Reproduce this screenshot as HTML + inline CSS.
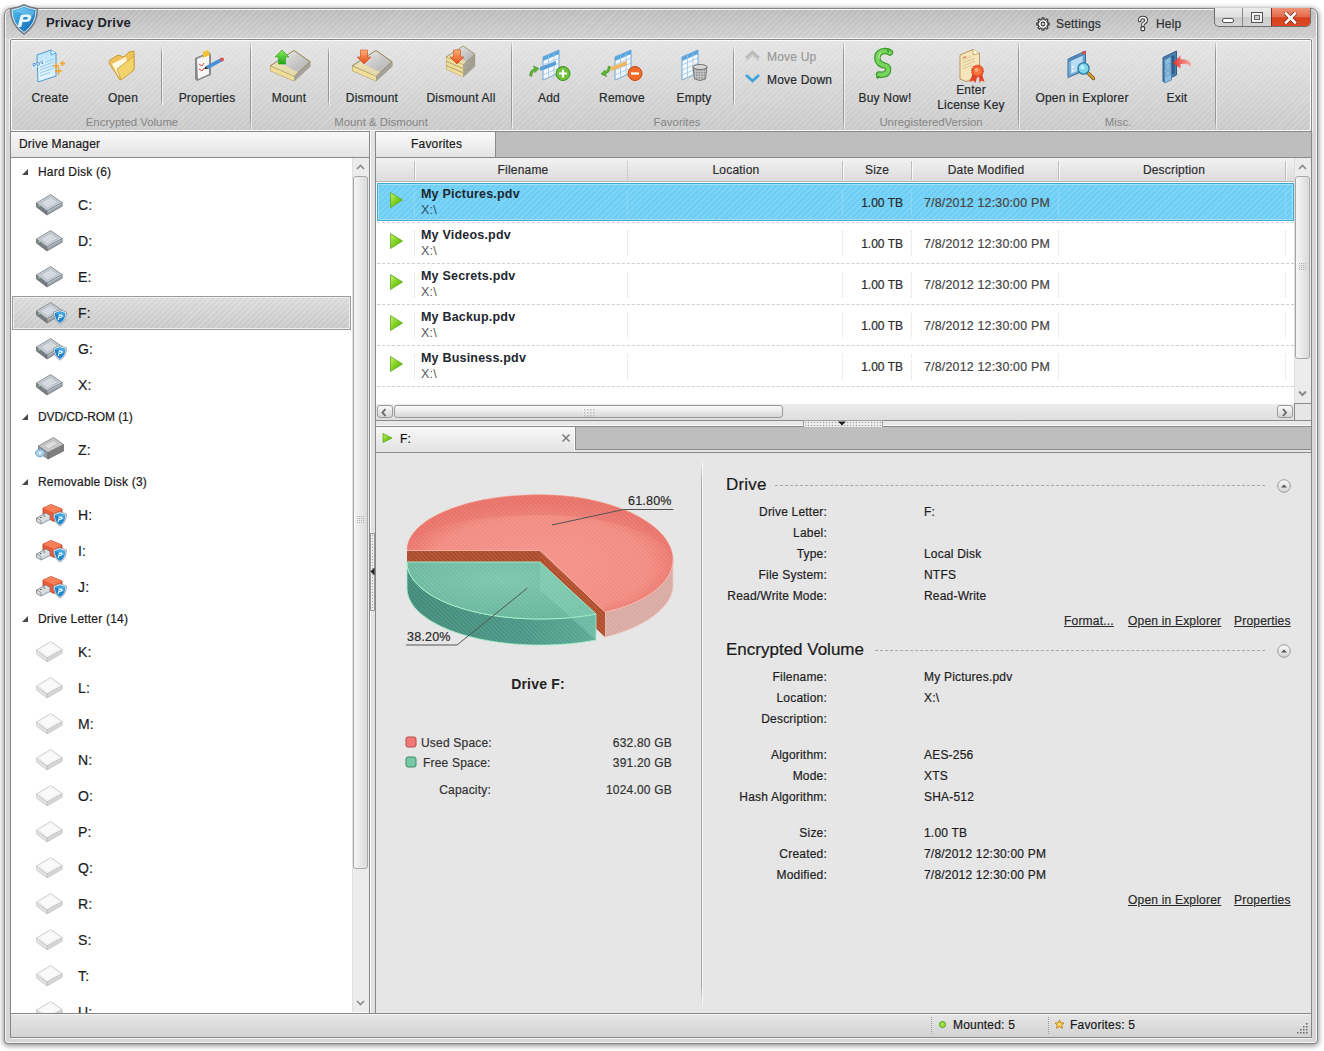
<!DOCTYPE html>
<html><head><meta charset="utf-8">
<style>
*{box-sizing:border-box}
html,body{margin:0;padding:0}
body{width:1324px;height:1051px;overflow:hidden;background:#fff;position:relative;font-family:"Liberation Sans",sans-serif;font-size:12px;color:#222;-webkit-text-stroke:0.2px currentColor;letter-spacing:0.2px}
.a{position:absolute}
.stripe{background-image:repeating-linear-gradient(135deg,rgba(255,255,255,.16) 0 1.5px,rgba(0,0,0,0) 1.5px 4px)}
#win{left:4px;top:8px;width:1314px;height:1036px;border:1px solid #858585;border-radius:7px 7px 4px 4px;background:#d6d6d6;box-shadow:0 1px 5px 1px rgba(0,0,0,.42),inset 0 0 0 1px #f4f4f4}
#title{left:6px;top:10px;width:1310px;height:28px;border-radius:5px 5px 0 0;background-color:#c4c4c4;background-image:repeating-linear-gradient(135deg,rgba(255,255,255,.14) 0 1.5px,rgba(0,0,0,0) 1.5px 4px),linear-gradient(#bcbcbc,#cecece)}
.tb{white-space:nowrap;color:#262a2c}
.tbl{text-align:center;line-height:14px}
.tl{width:120px;text-align:center;line-height:14px}
.grp{color:#858585;font-size:11.4px;text-align:center;-webkit-text-stroke:0;letter-spacing:0}
.sep{width:1px;background:linear-gradient(rgba(140,140,140,.2),#979797 12%,#979797 88%,rgba(140,140,140,.2));box-shadow:1px 0 0 rgba(255,255,255,.6)}
#toolbar{left:10px;top:39px;width:1302px;height:93px;border:1px solid #8a8a8a;border-radius:2px;box-shadow:0 0 0 1px #f2f2f2,inset 0 0 0 1px #fafafa;background-image:repeating-linear-gradient(135deg,rgba(255,255,255,.15) 0 1.5px,rgba(0,0,0,0) 1.5px 4px),linear-gradient(#e4e4e4,#c9c9c9)}
#left{left:10px;top:131px;width:360px;height:883px;border:1px solid #888;background:#fff}
.hdr{background:linear-gradient(#f9f9f9,#e3e3e3)}
.tree{font-size:12px;color:#1b1b1b;white-space:nowrap}
#right{left:375px;top:131px;width:937px;height:883px;border:1px solid #888;background:#e6e6e6}
.row{height:41px;border-bottom:1px dashed #d0d0d0;background:#fff}
.b{font-weight:bold;-webkit-text-stroke:0}
#status{left:10px;top:1013px;width:1302px;height:25px;border:1px solid #878787;box-shadow:0 1px 0 #f2f2f2,inset 0 1px 0 #f6f6f6;background:linear-gradient(#e6e6e6,#d3d3d3)}
.lbl{text-align:right;width:120px;color:#1c1c1c}
.val{color:#1c1c1c}
.lnk{text-decoration:underline;color:#333}
</style></head><body>
<div id="win" class="a"></div>
<div id="title" class="a"></div>
<div class="a b" style="left:46px;top:15px;font-size:13px;color:#1d2329">Privacy Drive</div>

<div id="toolbar" class="a"></div>



<svg class="a" style="left:0;top:0" width="1324" height="140" viewBox="0 0 1324 140">
<defs>
<linearGradient id="gdoc" x1="0" y1="0" x2="0" y2="1"><stop offset="0" stop-color="#b8e4fb"/><stop offset="1" stop-color="#e8f6fd"/></linearGradient>
<linearGradient id="gfold" x1="0" y1="0" x2="1" y2="1"><stop offset="0" stop-color="#f7d27a"/><stop offset="1" stop-color="#f2d060"/></linearGradient>
<linearGradient id="gtop" x1="0" y1="0" x2="1" y2="1"><stop offset="0" stop-color="#fafafa"/><stop offset=".45" stop-color="#d0d0d0"/><stop offset=".7" stop-color="#bdbdbd"/><stop offset="1" stop-color="#e4e4e4"/></linearGradient>
<linearGradient id="ggreen" x1="0" y1="0" x2="0" y2="1"><stop offset="0" stop-color="#8fe85a"/><stop offset="1" stop-color="#1aa815"/></linearGradient>
<linearGradient id="gred" x1="0" y1="0" x2="0" y2="1"><stop offset="0" stop-color="#ffb070"/><stop offset="1" stop-color="#e64a1c"/></linearGradient>
<linearGradient id="gblue" x1="0" y1="0" x2="1" y2="1"><stop offset="0" stop-color="#9fd0ee"/><stop offset="1" stop-color="#4b8fc0"/></linearGradient>
</defs>
<!-- logo shield -->
<defs><linearGradient id="gsh" x1="0" y1="0" x2="1" y2="1"><stop offset="0" stop-color="#5cc4f0"/><stop offset=".5" stop-color="#2a8fd4"/><stop offset="1" stop-color="#1660a8"/></linearGradient></defs>
<path d="M24 4.5 Q30 7.5 37.5 8.5 Q38 25 24 34.5 Q10 25 10.5 8.5 Q18 7.5 24 4.5 Z" fill="#7a8a98" stroke="#5a6670" stroke-width=".8"/>
<path d="M24 6.3 Q29.5 9 36 9.8 Q36 24 24 32.5 Q12 24 12 9.8 Q18.5 9 24 6.3 Z" fill="url(#gsh)" stroke="#d8e8f2" stroke-width="1"/>
<path d="M24 7.5 Q29 10 34.5 10.8 Q34 15 31 19 Q22 12 13.5 11 Q19 10 24 7.5 Z" fill="#8fdcfa" opacity=".45"/>
<path d="M17.5 27 L20.5 16 Q21 14.5 23 14.5 L28.5 14.5 Q32 15 31 18.5 Q30 22 25.5 22 L22.5 22 L21.2 27 Z M23.5 17 L23 19.5 L26 19.5 Q27.6 19.4 27.8 18.2 Q28 17 26.6 17 Z" fill="#e8f4fb" fill-rule="evenodd"/>
<!-- Create -->
<path d="M37 55 L51 50 L56 53 L56 76 L38 82 Z" fill="url(#gdoc)" stroke="#4b9bd0" stroke-width="1"/>
<path d="M51 50 L51 55 L56 53" fill="#d6effb" stroke="#4b9bd0" stroke-width=".8"/>
<path d="M40 64 L54 59 M40 67 L54 62 M40 70 L54 65 M40 73 L54 68 M40 76 L50 72.5" stroke="#8cc3e6" stroke-width=".8"/>
<path d="M32 64 L45 59 L45 64 L32 69 Z" fill="#e6f5fd"/>
<text x="33" y="67.5" font-size="5.5" font-weight="bold" fill="#3a86c6" transform="rotate(-20 33 67)" font-family="Liberation Sans">PDV</text>
<path d="M53 66 h6 M56 63 v6 M55 71 h7 M58.5 67.5 v7 M60 63.5 h5 M62.5 61 v5" stroke="#f3a42a" stroke-width="1.6"/>
<!-- Open folder -->
<path d="M110 60 L118 55 L124 57 L129 52 L134 51 L134 70 L120 80 L109 63 Z" fill="#f0c25a" stroke="#c99a3a" stroke-width="1"/>
<path d="M112 64 L126 57 L129 70 L119 77 Z" fill="#fff8e0"/>
<path d="M117 69 L134 56 L134 70 L121 80 Z" fill="#f1d56a" stroke="#c99a3a" stroke-width=".8"/>
<!-- Properties clipboard -->
<path d="M195 58 L209 52 L211 54 L211 75 L197 81 L195 79 Z" fill="#8a8a8a"/>
<path d="M197 59 L209 54 L209 74 L198 79 Z" fill="#f7f7f7"/>
<path d="M199 64 l3 2 l2-3 M199 69 l3 2 l2-3" stroke="#d44" stroke-width="1" fill="none"/>
<path d="M203 52 L208 50 L210 55 L203 58 Z" fill="#f3c233"/>
<path d="M206 66 L221 58 L223 61 L208 69 Z" fill="#4a90d9"/>
<circle cx="222" cy="59.5" r="2" fill="#d9534f"/>
<path d="M206 66 L204 69 L208 69 Z" fill="#333"/>
<!-- Mount -->
<g id="drv">
<path d="M270 65.5 L294 50 L310.5 61.5 L310.5 66.5 L294 81.5 L270 71 Z" fill="#a89660"/>
<path d="M270.5 65.8 L294 76 L294 81 L270.5 70.8 Z" fill="#efdd98"/>
<path d="M294 76 L310 61.8 L310 66.5 L294 81 Z" fill="#a2a2a2"/>
<path d="M270.5 65.8 L294 50.5 L310 61.8 L294 76 Z" fill="url(#gtop)" stroke="#9a8a58" stroke-width=".9"/>
<path d="M271.5 65.9 L277.5 62 L298 72.3 L294 76 Z" fill="#ebdfa8" opacity=".85"/>
</g>
<path d="M282 50 L289 57 L285.5 57 L285.5 64 L278.5 64 L278.5 57 L275 57 Z" fill="url(#ggreen)" stroke="#2d9a1a" stroke-width=".6"/>
<!-- Dismount -->
<use href="#drv" x="82" y="0"/>
<path d="M357 57 L364 64 L371 57 L367.5 57 L367.5 50 L360.5 50 L360.5 57 Z" fill="url(#gred)" stroke="#c84a1a" stroke-width=".6"/>
<!-- Dismount All -->
<g transform="translate(446,50) scale(.72,.72)">
<use href="#drv" x="-270" y="-56" transform="translate(0,12)"/>
<use href="#drv" x="-270" y="-56" transform="translate(0,6)"/>
<use href="#drv" x="-270" y="-56"/>
</g>
<path d="M450 57 L457 64 L464 57 L460.5 57 L460.5 50 L453.5 50 L453.5 57 Z" fill="url(#gred)" stroke="#c84a1a" stroke-width=".6"/>
<!-- grids -->
<g id="grid">
<path d="M543 57 L559 50 L559 73 L543 80 Z" fill="#f4f8fb" stroke="#6fa8d6" stroke-width="1"/>
<path d="M543 57 L559 50 L559 54 L543 61 Z" fill="#58a6e0"/>
<path d="M548.5 55 L548.5 78 M554 52.5 L554 75.5 M543 65 L559 58 M543 70 L559 63 M543 75 L559 68" stroke="#9cc4e4" stroke-width=".8"/>
</g>
<path d="M540 67 L556 61 L556 65 L540 71 Z" fill="#5a9fd8"/>
<circle cx="563" cy="73.5" r="7" fill="#6ec23a" stroke="#3f8e1e" stroke-width="1"/>
<path d="M559 73.5 h8 M563 69.5 v8" stroke="#fff" stroke-width="2.2"/>
<path d="M529.5 75.5 Q530 70 534.5 68.5 L533.5 66 L539 68.5 L535 72.5 L534.8 70.8 Q532 72 531.5 76.5 Z" fill="#5cb82e" stroke="#3a8a1a" stroke-width=".6"/>
<use href="#grid" x="72" y="0"/>
<path d="M611 67 L627 61 L627 65 L611 71 Z" fill="#f2b763"/>
<circle cx="635" cy="73.5" r="7" fill="#f06a2a" stroke="#c04a18" stroke-width="1"/>
<path d="M631 73.5 h8" stroke="#fff" stroke-width="2.2"/>
<path d="M610.5 67 Q610 72.5 605.5 74 L606.5 76.5 L601 74 L605 70 L605.2 71.7 Q608 70.5 608.5 66 Z" fill="#5cb82e" stroke="#3a8a1a" stroke-width=".6"/>
<use href="#grid" x="139" y="0"/>
<defs><pattern id="mesh" width="1.6" height="1.6" patternUnits="userSpaceOnUse"><rect width="1.6" height="1.6" fill="#c4c4c4"/><rect width=".8" height=".8" fill="#7a7a7a"/></pattern></defs>
<path d="M693 67 L694.5 79 Q700 82 705.5 79 L707 67 Q700 70 693 67 Z" fill="url(#mesh)" stroke="#666" stroke-width=".8"/>
<ellipse cx="700" cy="67" rx="7" ry="2.5" fill="#d8d8d8" stroke="#666" stroke-width=".9"/>
<!-- Move up/down chevrons -->
<path d="M746 58 L752.5 52 L759 58" stroke="#b9b9b9" stroke-width="2.6" fill="none"/>
<path d="M746 61 L752.5 55 L759 61" stroke="#c8c8c8" stroke-width="1.5" fill="none"/>
<path d="M746 75 L752.5 81 L759 75" stroke="#3aa4dc" stroke-width="2.6" fill="none"/>
<!-- Dollar -->
<path d="M890 52.5 Q887 50 882 51.5 Q876.5 53.5 877.5 59.5 Q878.5 64 884.5 65.5 Q889 66.5 888 71 Q886.5 75.5 879 74.5" stroke="#3b9a2e" stroke-width="6.4" fill="none" stroke-linecap="round"/>
<path d="M890 52.5 Q887 50 882 51.5 Q876.5 53.5 877.5 59.5 Q878.5 64 884.5 65.5 Q889 66.5 888 71 Q886.5 75.5 879 74.5" stroke="#78d45a" stroke-width="4" fill="none" stroke-linecap="round"/>
<path d="M881 52.5 Q878.5 55 879 59" stroke="#b4f090" stroke-width="1.2" fill="none"/>
<path d="M886 49.5 L889.5 49.5 L888.5 53 Z M876 77 L880 76 L877.5 79.5 Z" fill="#3b9a2e"/>
<!-- Certificate -->
<path d="M960 55 L973 49.5 L979.5 53 L979.5 76 L966 81.5 L960 79 Z" fill="#f6e4bb" stroke="#b89a5a" stroke-width="1"/>
<path d="M973 49.5 L973 55 L979.5 53" fill="#fff6e0" stroke="#b89a5a" stroke-width=".8"/>
<path d="M962.5 60 L971 56.5 M962.5 63 L975 58 M962.5 66 L975 61 M962.5 69 L972 65" stroke="#dcc090" stroke-width=".9"/>
<rect x="963" y="57" width="3" height="1.5" fill="#e08060" transform="rotate(-22 963 57)"/>
<path d="M972.5 74 L969.5 82 L973.5 80.5 L975.5 83 L977.5 75 Z M979 75 L979.5 83 L981.5 80.5 L984.5 82 L982 74 Z" fill="#e3442a"/>
<circle cx="977.5" cy="71" r="5.8" fill="#f05a28" stroke="#e04020" stroke-width="1.3" stroke-dasharray="1.3 .9"/>
<circle cx="977.5" cy="71" r="3.8" fill="#f57a40"/>
<circle cx="976.5" cy="70" r="1.8" fill="#ffb080"/>
<!-- Open in explorer -->
<defs>
<linearGradient id="gwin" x1="0" y1="0" x2="1" y2="1"><stop offset="0" stop-color="#8cc4ea"/><stop offset="1" stop-color="#4f8fc0"/></linearGradient>
<linearGradient id="garr" x1="0" y1="0" x2="1" y2="0"><stop offset="0" stop-color="#e8302a"/><stop offset="1" stop-color="#f7b0a8"/></linearGradient>
</defs>
<path d="M1068 59 L1085.5 51 L1085.5 70 L1068 77.5 Z" fill="url(#gwin)" stroke="#3a6e9a" stroke-width="1"/>
<path d="M1070.5 60.5 L1083 55 L1083 69 L1070.5 74.5 Z" fill="#b9dcf2" stroke="#6aa0c8" stroke-width=".6"/>
<path d="M1068.5 59 L1085 51.5 L1085 54.5 L1068.5 62 Z" fill="#4f86b8"/>
<rect x="1082.5" y="51" width="3" height="3.5" fill="#e0503a"/>
<rect x="1072" y="66" width="1.6" height="1.6" fill="#fff"/><rect x="1072" y="70" width="1.6" height="1.6" fill="#fff"/>
<path d="M1087.5 72.5 L1093.5 78.5" stroke="#6a4a10" stroke-width="3.2" stroke-linecap="round"/>
<path d="M1087.5 72.5 L1093.5 78.5" stroke="#e0a030" stroke-width="1.8" stroke-linecap="round"/>
<circle cx="1083.5" cy="68.5" r="5.6" fill="#7fd4ea" stroke="#2a7ea8" stroke-width="1.4"/>
<circle cx="1082.3" cy="67.2" r="2.2" fill="#c8f2fc" opacity=".8"/>
<!-- Exit door -->
<path d="M1163 57.5 L1176.5 51 L1176.5 75 L1163 81.5 Z" fill="#4a7fae" stroke="#2f5d86" stroke-width="1"/>
<path d="M1165 59.5 L1174.5 55 L1174.5 73.5 L1165 78 Z" fill="#2f5f88"/>
<path d="M1164.5 60 L1171 56.5 L1171.5 80 L1164.5 83 Z" fill="#8cbedf" stroke="#4a7fae" stroke-width=".8"/>
<path d="M1166 65 L1170 63 L1170 68 L1166 70 Z M1166 72 L1170 70 L1170 75 L1166 77 Z" fill="none" stroke="#5a8fba" stroke-width=".6"/>
<path d="M1173 63 L1180.5 55.5 L1180.5 59.5 Q1187 58.5 1191 63 L1191 67 Q1187 62.5 1180.5 64 L1180.5 68.5 Z" fill="url(#garr)"/>
<!-- settings gear / help -->
<path d="M1047.49 23.00 L1049.12 23.01 L1049.12 24.99 L1047.49 25.00 L1047.25 25.76 L1046.88 26.46 L1048.03 27.63 L1046.63 29.03 L1045.46 27.88 L1044.76 28.25 L1044.00 28.49 L1043.99 30.12 L1042.01 30.12 L1042.00 28.49 L1041.24 28.25 L1040.54 27.88 L1039.37 29.03 L1037.97 27.63 L1039.12 26.46 L1038.75 25.76 L1038.51 25.00 L1036.88 24.99 L1036.88 23.01 L1038.51 23.00 L1038.75 22.24 L1039.12 21.54 L1037.97 20.37 L1039.37 18.97 L1040.54 20.12 L1041.24 19.75 L1042.00 19.51 L1042.01 17.88 L1043.99 17.88 L1044.00 19.51 L1044.76 19.75 L1045.46 20.12 L1046.63 18.97 L1048.03 20.37 L1046.88 21.54 L1047.25 22.24 Z" fill="#fff" stroke="#3a3a3a" stroke-width="1.3" stroke-linejoin="round"/>
<circle cx="1043" cy="24" r="1.9" fill="#ddd" stroke="#3a3a3a" stroke-width="1.1"/>
<path d="M1139.5 20.5 Q1139.5 17.5 1142.8 17.5 Q1146.2 17.5 1146.2 20.3 Q1146.2 22.3 1143.8 23.3 Q1142.8 23.8 1142.8 25.5" stroke="#3a3a3a" stroke-width="3.6" fill="none" stroke-linecap="round"/>
<path d="M1139.5 20.5 Q1139.5 17.5 1142.8 17.5 Q1146.2 17.5 1146.2 20.3 Q1146.2 22.3 1143.8 23.3 Q1142.8 23.8 1142.8 25.5" stroke="#fff" stroke-width="1.6" fill="none" stroke-linecap="round"/>
<rect x="1141" y="27" width="3.6" height="3.6" rx=".8" fill="#fff" stroke="#3a3a3a" stroke-width="1.1"/>
</svg>


<div class="a tb" style="left:1056px;top:17px;line-height:14px;color:#2c3033">Settings</div>
<div class="a tb" style="left:1156px;top:17px;line-height:14px;color:#2c3033">Help</div>
<div class="a" style="left:1214px;top:8px;width:97px;height:19px;border:1px solid #6e6e6e;border-top:none;border-radius:0 0 5px 5px;overflow:hidden;background:linear-gradient(#ececec 0,#dedede 50%,#cdcdcd 51%,#d4d4d4 100%)">
 <div class="a" style="left:27px;top:0;width:1px;height:19px;background:#8a8a8a"></div>
 <div class="a" style="left:56px;top:0;width:40px;height:19px;border-left:1px solid #7a3020;background:linear-gradient(#ee9478 0,#e46a4c 45%,#d8401c 52%,#dc4a24 100%)"></div>
</div>
<div class="a" style="left:1222px;top:18px;width:12px;height:5px;border:1px solid #555;border-radius:2px;background:#fff"></div>
<div class="a" style="left:1251px;top:12px;width:12px;height:11px;border:1px solid #555;background:#f4f4f4"><div class="a" style="left:2px;top:2px;width:6px;height:5px;border:1px solid #666;background:#ccc"></div></div>
<svg class="a" style="left:1284px;top:12px" width="13" height="12"><path d="M2 1.5 L11 10.5 M11 1.5 L2 10.5" stroke="#7a2a18" stroke-width="4" stroke-linecap="round"/><path d="M2 1.5 L11 10.5 M11 1.5 L2 10.5" stroke="#fff" stroke-width="2.6" stroke-linecap="square"/></svg>

<!-- TOOLBAR -->
<div class="a sep" style="left:161px;top:47px;height:59px"></div>
<div class="a sep" style="left:250px;top:42px;height:87px"></div>
<div class="a sep" style="left:328px;top:47px;height:59px"></div>
<div class="a sep" style="left:511px;top:42px;height:87px"></div>
<div class="a sep" style="left:733px;top:47px;height:59px"></div>
<div class="a sep" style="left:843px;top:42px;height:87px"></div>
<div class="a sep" style="left:1018px;top:42px;height:87px"></div>
<div class="a sep" style="left:1215px;top:42px;height:87px"></div>
<div class="a tb tl" style="left:-10px;top:91px">Create</div>
<div class="a tb tl" style="left:63px;top:91px">Open</div>
<div class="a tb tl" style="left:147px;top:91px">Properties</div>
<div class="a tb tl" style="left:229px;top:91px">Mount</div>
<div class="a tb tl" style="left:312px;top:91px">Dismount</div>
<div class="a tb tl" style="left:401px;top:91px">Dismount All</div>
<div class="a tb tl" style="left:489px;top:91px">Add</div>
<div class="a tb tl" style="left:562px;top:91px">Remove</div>
<div class="a tb tl" style="left:634px;top:91px">Empty</div>
<div class="a tb" style="left:767px;top:50px;line-height:14px;color:#9a9a9a">Move Up</div>
<div class="a tb" style="left:767px;top:73px;line-height:14px">Move Down</div>
<div class="a tb tl" style="left:825px;top:91px">Buy Now!</div>
<div class="a tb tl" style="left:911px;top:83px;line-height:15px">Enter<br>License Key</div>
<div class="a tb tl" style="left:1022px;top:91px">Open in Explorer</div>
<div class="a tb tl" style="left:1117px;top:91px">Exit</div>
<div class="a grp tl" style="left:72px;top:115px">Encrypted Volume</div>
<div class="a grp tl" style="left:321px;top:115px">Mount &amp; Dismount</div>
<div class="a grp tl" style="left:617px;top:115px">Favorites</div>
<div class="a grp tl" style="left:871px;top:115px">UnregisteredVersion</div>
<div class="a grp tl" style="left:1058px;top:115px">Misc.</div>

<div id="left" class="a"></div>
<div class="a hdr" style="left:11px;top:132px;width:358px;height:26px;border-bottom:1px solid #8a8a8a"></div>
<div class="a tree" style="left:19px;top:137px">Drive Manager</div>


<!-- LEFT TREE -->
<div class="a" style="left:12px;top:296px;width:339px;height:34px;border:1px solid #9c9c9c;box-shadow:inset 0 0 0 1px #eeeeee;background-image:repeating-linear-gradient(135deg,rgba(255,255,255,.2) 0 1.5px,rgba(0,0,0,0) 1.5px 4px),linear-gradient(#dadada,#c8c8c8)"></div>
<div class="a" style="left:352px;top:158px;width:17px;height:854px;background:#ececec;border-left:1px solid #e0e0e0"></div>
<div class="a" style="left:353px;top:176px;width:15px;height:693px;border:1px solid #a8a8a8;border-radius:3px;background:linear-gradient(90deg,#f6f6f6,#dadada)"></div>
<svg class="a" style="left:352px;top:158px" width="17" height="854">
<path d="M5 11 L8.5 7.5 L12 11" stroke="#8a8a8a" stroke-width="1.6" fill="none"/>
<path d="M5 843 L8.5 846.5 L12 843" stroke="#8a8a8a" stroke-width="1.6" fill="none"/>
<g fill="#b0b0b0"><rect x="5" y="358" width="1" height="1"/><rect x="7" y="358" width="1" height="1"/><rect x="9" y="358" width="1" height="1"/><rect x="11" y="358" width="1" height="1"/>
<rect x="5" y="360" width="1" height="1"/><rect x="7" y="360" width="1" height="1"/><rect x="9" y="360" width="1" height="1"/><rect x="11" y="360" width="1" height="1"/>
<rect x="5" y="362" width="1" height="1"/><rect x="7" y="362" width="1" height="1"/><rect x="9" y="362" width="1" height="1"/><rect x="11" y="362" width="1" height="1"/>
<rect x="5" y="364" width="1" height="1"/><rect x="7" y="364" width="1" height="1"/><rect x="9" y="364" width="1" height="1"/><rect x="11" y="364" width="1" height="1"/></g>
</svg>

<svg class="a" style="left:0;top:150px" width="352" height="863" viewBox="0 150 352 863">
<defs>
<symbol id="hdd" viewBox="0 0 27 22" width="27" height="22">
<path d="M0.5 9 L11 16.8 L11 21 L0.5 13 Z" fill="#767d83" stroke="#5e656b" stroke-width=".7"/>
<path d="M11 16.8 L26.2 8.5 L26.2 12.2 L11 21 Z" fill="#9aa2aa" stroke="#6d747a" stroke-width=".7"/>
<path d="M11.5 17.5 L25.5 9.8" stroke="#d8e0e6" stroke-width=".7"/>
<path d="M0.5 9 L14.6 0.5 L26.2 8.5 L11 16.8 Z" fill="#c6ccd3" stroke="#7b8288" stroke-width=".8"/>
<path d="M4.5 9 L14.6 3 L22 8.4 L11.2 14.4 Z" fill="#d4dae0" stroke="#a9b0b6" stroke-width=".6"/>
<rect x="2" y="11" width="2" height="1.2" fill="#8ad080"/>
</symbol>
<symbol id="hdde" viewBox="0 0 27 22" width="27" height="22">
<path d="M0.5 9 L11 16.8 L11 21 L0.5 13 Z" fill="#e2e2e2" stroke="#c4c4c4" stroke-width=".7"/>
<path d="M11 16.8 L26.2 8.5 L26.2 12.2 L11 21 Z" fill="#d6d6d6" stroke="#c0c0c0" stroke-width=".7"/>
<path d="M0.5 9 L14.6 0.5 L26.2 8.5 L11 16.8 Z" fill="#f4f4f4" stroke="#c6c6c6" stroke-width=".8"/>
<path d="M4 9 L14.6 2.5 L22.5 8.3 L11.2 14.6 Z" fill="#fafafa"/>
</symbol>
<symbol id="shield" viewBox="0 0 13 14" width="13" height="14" overflow="visible">
<path d="M6.5 -0.2 L13 2 Q13 10.2 6.5 14.2 Q0 10.2 0 2 Z" fill="#e6eef4" stroke="#7a8a96" stroke-width=".7"/>
<path d="M6.5 1.2 L11.8 2.9 Q11.8 9.6 6.5 12.9 Q1.2 9.6 1.2 2.9 Z" fill="#1f86cc"/>
<path d="M6.5 1.5 L11.5 3.1 Q11.3 6 9.8 8 Q6 4 1.6 3.6 Z" fill="#5cc0f0" opacity=".6"/>
<path d="M4.3 10 L5.4 4.6 L8 4.6 Q9.6 5 9.2 6.6 Q8.7 7.9 6.9 7.9 L5.9 7.9 L5.4 10 Z M6.1 5.8 L5.9 6.8 L7 6.8 Q7.8 6.7 7.8 6.2 Q7.8 5.8 7.2 5.8 Z" fill="#eef8fd" fill-rule="evenodd"/>
</symbol>
</defs>

<path d="M22 175 L28 175 L28 169 Z" fill="#4a4a4a"/>
<path d="M22 420 L28 420 L28 414 Z" fill="#4a4a4a"/>
<path d="M22 485 L28 485 L28 479 Z" fill="#4a4a4a"/>
<path d="M22 622 L28 622 L28 616 Z" fill="#4a4a4a"/>
<use href="#hdd" x="36" y="194"/>
<use href="#hdd" x="36" y="230"/>
<use href="#hdd" x="36" y="266"/>
<use href="#hdd" x="36" y="302"/>
<use href="#shield" x="53.5" y="310"/>
<use href="#hdd" x="36" y="338"/>
<use href="#shield" x="53.5" y="346"/>
<use href="#hdd" x="36" y="374"/>
<use href="#hdde" x="36" y="641"/>
<use href="#hdde" x="36" y="677"/>
<use href="#hdde" x="36" y="713"/>
<use href="#hdde" x="36" y="749"/>
<use href="#hdde" x="36" y="785"/>
<use href="#hdde" x="36" y="821"/>
<use href="#hdde" x="36" y="857"/>
<use href="#hdde" x="36" y="893"/>
<use href="#hdde" x="36" y="929"/>
<use href="#hdde" x="36" y="965"/>
<use href="#hdde" x="36" y="1001"/>
<g transform="translate(38,437)">
<path d="M0.5 9 L10 15.5 L10 22 L0.5 15.5 Z" fill="#9a9a9a" stroke="#6e6e6e" stroke-width=".7"/>
<path d="M10 15.5 L25.5 7.5 L25.5 14 L10 22 Z" fill="#7e7e7e" stroke="#646464" stroke-width=".7"/>
<path d="M0.5 9 L15.5 0.5 L25.5 7.5 L10 15.5 Z" fill="#c8c8c8" stroke="#7a7a7a" stroke-width=".8"/>
<path d="M6 8.5 L15.5 3.5 L20 7 L10.5 12 Z" fill="#dcdcdc" stroke="#b0b0b0" stroke-width=".6"/>
</g>
<ellipse cx="40" cy="453" rx="4.5" ry="3.8" fill="#a9d2ea" stroke="#5d9cc2" stroke-width=".8"/>
<ellipse cx="40" cy="453" rx="1.3" ry="1" fill="#fff"/>

<g transform="translate(36,504)">
<path d="M7 4 L15 0.5 L26 5 L26 13 L18 17.5 L7 12 Z" fill="#e95a38" stroke="#b8401f" stroke-width=".8"/>
<path d="M7 4 L15 0.5 L26 5 L18 9 Z" fill="#f4805a"/>
<path d="M0.5 14 L10 9 L14 11.5 L14 15.5 L5 20 L0.5 17.5 Z" fill="#d8dde2" stroke="#7a8288" stroke-width=".8"/>
<path d="M0.5 14 L5 16.5 L5 20" stroke="#7a8288" stroke-width=".7" fill="none"/>
<rect x="4" y="13" width="1.5" height="1" fill="#555"/><rect x="7.5" y="11.5" width="1.5" height="1" fill="#555"/>
</g>
<use href="#shield" x="53.5" y="512"/>
<g transform="translate(36,540)">
<path d="M7 4 L15 0.5 L26 5 L26 13 L18 17.5 L7 12 Z" fill="#e95a38" stroke="#b8401f" stroke-width=".8"/>
<path d="M7 4 L15 0.5 L26 5 L18 9 Z" fill="#f4805a"/>
<path d="M0.5 14 L10 9 L14 11.5 L14 15.5 L5 20 L0.5 17.5 Z" fill="#d8dde2" stroke="#7a8288" stroke-width=".8"/>
<path d="M0.5 14 L5 16.5 L5 20" stroke="#7a8288" stroke-width=".7" fill="none"/>
<rect x="4" y="13" width="1.5" height="1" fill="#555"/><rect x="7.5" y="11.5" width="1.5" height="1" fill="#555"/>
</g>
<use href="#shield" x="53.5" y="548"/>
<g transform="translate(36,576)">
<path d="M7 4 L15 0.5 L26 5 L26 13 L18 17.5 L7 12 Z" fill="#e95a38" stroke="#b8401f" stroke-width=".8"/>
<path d="M7 4 L15 0.5 L26 5 L18 9 Z" fill="#f4805a"/>
<path d="M0.5 14 L10 9 L14 11.5 L14 15.5 L5 20 L0.5 17.5 Z" fill="#d8dde2" stroke="#7a8288" stroke-width=".8"/>
<path d="M0.5 14 L5 16.5 L5 20" stroke="#7a8288" stroke-width=".7" fill="none"/>
<rect x="4" y="13" width="1.5" height="1" fill="#555"/><rect x="7.5" y="11.5" width="1.5" height="1" fill="#555"/>
</g>
<use href="#shield" x="53.5" y="584"/>
</svg>
<div class="a tree" style="left:38px;top:165px;line-height:14px">Hard Disk (6)</div>
<div class="a tree" style="left:38px;top:410px;line-height:14px;letter-spacing:-0.1px">DVD/CD-ROM (1)</div>
<div class="a tree" style="left:38px;top:475px;line-height:14px">Removable Disk (3)</div>
<div class="a tree" style="left:38px;top:612px;line-height:14px">Drive Letter (14)</div>
<div class="a tree" style="left:78px;top:198px;line-height:14px;font-size:14px">C:</div>
<div class="a tree" style="left:78px;top:234px;line-height:14px;font-size:14px">D:</div>
<div class="a tree" style="left:78px;top:270px;line-height:14px;font-size:14px">E:</div>
<div class="a tree" style="left:78px;top:306px;line-height:14px;font-size:14px">F:</div>
<div class="a tree" style="left:78px;top:342px;line-height:14px;font-size:14px">G:</div>
<div class="a tree" style="left:78px;top:378px;line-height:14px;font-size:14px">X:</div>
<div class="a tree" style="left:78px;top:645px;line-height:14px;font-size:14px">K:</div>
<div class="a tree" style="left:78px;top:681px;line-height:14px;font-size:14px">L:</div>
<div class="a tree" style="left:78px;top:717px;line-height:14px;font-size:14px">M:</div>
<div class="a tree" style="left:78px;top:753px;line-height:14px;font-size:14px">N:</div>
<div class="a tree" style="left:78px;top:789px;line-height:14px;font-size:14px">O:</div>
<div class="a tree" style="left:78px;top:825px;line-height:14px;font-size:14px">P:</div>
<div class="a tree" style="left:78px;top:861px;line-height:14px;font-size:14px">Q:</div>
<div class="a tree" style="left:78px;top:897px;line-height:14px;font-size:14px">R:</div>
<div class="a tree" style="left:78px;top:933px;line-height:14px;font-size:14px">S:</div>
<div class="a tree" style="left:78px;top:969px;line-height:14px;font-size:14px">T:</div>
<div class="a tree" style="left:78px;top:1005px;line-height:14px;font-size:14px;height:8px;overflow:hidden">U:</div>
<div class="a tree" style="left:78px;top:443px;line-height:14px;font-size:14px">Z:</div>
<div class="a tree" style="left:78px;top:508px;line-height:14px;font-size:14px">H:</div>
<div class="a tree" style="left:78px;top:544px;line-height:14px;font-size:14px">I:</div>
<div class="a tree" style="left:78px;top:580px;line-height:14px;font-size:14px">J:</div>
<div id="right" class="a"></div>


<!-- RIGHT PANEL -->
<div class="a" style="left:370px;top:131px;width:5px;height:882px;background:#e2e2e2;box-shadow:inset 1px 0 0 #f8f8f8"></div>
<div class="a" style="left:376px;top:132px;width:935px;height:26px;background:#bebebe;border-bottom:1px solid #8a8a8a"></div>
<div class="a hdr" style="left:376px;top:132px;width:120px;height:25px;border-right:1px solid #8a8a8a;background:linear-gradient(#fafafa,#e4e4e4)"></div>
<div class="a tb" style="left:411px;top:137px;line-height:14px;color:#1a1a1a">Favorites</div>
<div class="a" style="left:376px;top:158px;width:935px;height:24px;border-bottom:1px solid #b8b8b8;background:linear-gradient(#f2f2f2,#dcdcdc)"></div>
<div class="a" style="left:376px;top:182px;width:918px;height:222px;background:#fff"></div>

<div class="a" style="left:414px;top:161px;width:2px;height:19px;background:#bdbdbd;border-right:1px solid #fafafa"></div>
<div class="a" style="left:842px;top:161px;width:2px;height:19px;background:#bdbdbd;border-right:1px solid #fafafa"></div>
<div class="a" style="left:911px;top:161px;width:2px;height:19px;background:#bdbdbd;border-right:1px solid #fafafa"></div>
<div class="a" style="left:1058px;top:161px;width:2px;height:19px;background:#bdbdbd;border-right:1px solid #fafafa"></div>
<div class="a" style="left:1285px;top:161px;width:2px;height:19px;background:#bdbdbd;border-right:1px solid #fafafa"></div>
<div class="a" style="left:627px;top:161px;width:0;height:19px;border-left:1px dotted #b8b8b8"></div>
<div class="a tb tl" style="left:463px;top:163px;color:#2e2e2e">Filename</div>
<div class="a tb tl" style="left:676px;top:163px;color:#2e2e2e">Location</div>
<div class="a tb tl" style="left:817px;top:163px;color:#2e2e2e">Size</div>
<div class="a tb tl" style="left:926px;top:163px;color:#2e2e2e">Date Modified</div>
<div class="a tb tl" style="left:1114px;top:163px;color:#2e2e2e">Description</div>
<div class="a" style="left:377px;top:183px;width:917px;height:38px;border:1px solid #40a8d8;box-shadow:inset 0 0 0 1px #9fe0fa;background-color:#6ccef5;background-image:repeating-linear-gradient(135deg,rgba(255,255,255,.12) 0 2px,rgba(0,0,0,0) 2px 4px)"></div>
<div class="a" style="left:377px;top:222px;width:917px;height:1px;border-top:1px dashed #cfcfcf"></div>
<div class="a" style="left:414px;top:190px;height:25px;width:0;border-left:1px dotted #a8dcf2"></div>
<div class="a" style="left:627px;top:190px;height:25px;width:0;border-left:1px dotted #a8dcf2"></div>
<div class="a" style="left:842px;top:190px;height:25px;width:0;border-left:1px dotted #a8dcf2"></div>
<div class="a" style="left:911px;top:190px;height:25px;width:0;border-left:1px dotted #a8dcf2"></div>
<div class="a" style="left:1058px;top:190px;height:25px;width:0;border-left:1px dotted #a8dcf2"></div>
<div class="a" style="left:1285px;top:190px;height:25px;width:0;border-left:1px dotted #a8dcf2"></div>
<div class="a b" style="left:421px;top:187px;line-height:14px;font-size:12.5px;color:#1d2730">My Pictures.pdv</div>
<div class="a" style="left:421px;top:203px;line-height:14px;font-size:12.5px;color:#2b4f66;-webkit-text-stroke:0">X:\</div>
<div class="a" style="left:842px;top:196px;width:61px;text-align:right;line-height:14px;color:#2a2a2a;letter-spacing:0">1.00 TB</div>
<div class="a" style="left:924px;top:196px;line-height:14px;font-size:12.4px;color:#444">7/8/2012 12:30:00 PM</div>
<div class="a" style="left:377px;top:263px;width:917px;height:1px;border-top:1px dashed #cfcfcf"></div>
<div class="a" style="left:414px;top:231px;height:25px;width:0;border-left:1px dotted #dadada"></div>
<div class="a" style="left:627px;top:231px;height:25px;width:0;border-left:1px dotted #dadada"></div>
<div class="a" style="left:842px;top:231px;height:25px;width:0;border-left:1px dotted #dadada"></div>
<div class="a" style="left:911px;top:231px;height:25px;width:0;border-left:1px dotted #dadada"></div>
<div class="a" style="left:1058px;top:231px;height:25px;width:0;border-left:1px dotted #dadada"></div>
<div class="a" style="left:1285px;top:231px;height:25px;width:0;border-left:1px dotted #dadada"></div>
<div class="a b" style="left:421px;top:228px;line-height:14px;font-size:12.5px;color:#1d2730">My Videos.pdv</div>
<div class="a" style="left:421px;top:244px;line-height:14px;font-size:12.5px;color:#5a5a5a;-webkit-text-stroke:0">X:\</div>
<div class="a" style="left:842px;top:237px;width:61px;text-align:right;line-height:14px;color:#2a2a2a;letter-spacing:0">1.00 TB</div>
<div class="a" style="left:924px;top:237px;line-height:14px;font-size:12.4px;color:#444">7/8/2012 12:30:00 PM</div>
<div class="a" style="left:377px;top:304px;width:917px;height:1px;border-top:1px dashed #cfcfcf"></div>
<div class="a" style="left:414px;top:272px;height:25px;width:0;border-left:1px dotted #dadada"></div>
<div class="a" style="left:627px;top:272px;height:25px;width:0;border-left:1px dotted #dadada"></div>
<div class="a" style="left:842px;top:272px;height:25px;width:0;border-left:1px dotted #dadada"></div>
<div class="a" style="left:911px;top:272px;height:25px;width:0;border-left:1px dotted #dadada"></div>
<div class="a" style="left:1058px;top:272px;height:25px;width:0;border-left:1px dotted #dadada"></div>
<div class="a" style="left:1285px;top:272px;height:25px;width:0;border-left:1px dotted #dadada"></div>
<div class="a b" style="left:421px;top:269px;line-height:14px;font-size:12.5px;color:#1d2730">My Secrets.pdv</div>
<div class="a" style="left:421px;top:285px;line-height:14px;font-size:12.5px;color:#5a5a5a;-webkit-text-stroke:0">X:\</div>
<div class="a" style="left:842px;top:278px;width:61px;text-align:right;line-height:14px;color:#2a2a2a;letter-spacing:0">1.00 TB</div>
<div class="a" style="left:924px;top:278px;line-height:14px;font-size:12.4px;color:#444">7/8/2012 12:30:00 PM</div>
<div class="a" style="left:377px;top:345px;width:917px;height:1px;border-top:1px dashed #cfcfcf"></div>
<div class="a" style="left:414px;top:313px;height:25px;width:0;border-left:1px dotted #dadada"></div>
<div class="a" style="left:627px;top:313px;height:25px;width:0;border-left:1px dotted #dadada"></div>
<div class="a" style="left:842px;top:313px;height:25px;width:0;border-left:1px dotted #dadada"></div>
<div class="a" style="left:911px;top:313px;height:25px;width:0;border-left:1px dotted #dadada"></div>
<div class="a" style="left:1058px;top:313px;height:25px;width:0;border-left:1px dotted #dadada"></div>
<div class="a" style="left:1285px;top:313px;height:25px;width:0;border-left:1px dotted #dadada"></div>
<div class="a b" style="left:421px;top:310px;line-height:14px;font-size:12.5px;color:#1d2730">My Backup.pdv</div>
<div class="a" style="left:421px;top:326px;line-height:14px;font-size:12.5px;color:#5a5a5a;-webkit-text-stroke:0">X:\</div>
<div class="a" style="left:842px;top:319px;width:61px;text-align:right;line-height:14px;color:#2a2a2a;letter-spacing:0">1.00 TB</div>
<div class="a" style="left:924px;top:319px;line-height:14px;font-size:12.4px;color:#444">7/8/2012 12:30:00 PM</div>
<div class="a" style="left:377px;top:386px;width:917px;height:1px;border-top:1px dashed #cfcfcf"></div>
<div class="a" style="left:414px;top:354px;height:25px;width:0;border-left:1px dotted #dadada"></div>
<div class="a" style="left:627px;top:354px;height:25px;width:0;border-left:1px dotted #dadada"></div>
<div class="a" style="left:842px;top:354px;height:25px;width:0;border-left:1px dotted #dadada"></div>
<div class="a" style="left:911px;top:354px;height:25px;width:0;border-left:1px dotted #dadada"></div>
<div class="a" style="left:1058px;top:354px;height:25px;width:0;border-left:1px dotted #dadada"></div>
<div class="a" style="left:1285px;top:354px;height:25px;width:0;border-left:1px dotted #dadada"></div>
<div class="a b" style="left:421px;top:351px;line-height:14px;font-size:12.5px;color:#1d2730">My Business.pdv</div>
<div class="a" style="left:421px;top:367px;line-height:14px;font-size:12.5px;color:#5a5a5a;-webkit-text-stroke:0">X:\</div>
<div class="a" style="left:842px;top:360px;width:61px;text-align:right;line-height:14px;color:#2a2a2a;letter-spacing:0">1.00 TB</div>
<div class="a" style="left:924px;top:360px;line-height:14px;font-size:12.4px;color:#444">7/8/2012 12:30:00 PM</div>
<svg class="a" style="left:376px;top:182px" width="918" height="222"><defs><linearGradient id="gplay" x1="0" y1="0" x2="1" y2="1"><stop offset="0" stop-color="#c6f26a"/><stop offset=".5" stop-color="#7fcf1f"/><stop offset="1" stop-color="#4ea80c"/></linearGradient></defs>
<path d="M14.5 10.5 L26.5 18 L14.5 25.5 Z" fill="url(#gplay)" stroke="#5aa81a" stroke-width=".8"/>
<path d="M14.5 51.5 L26.5 59 L14.5 66.5 Z" fill="url(#gplay)" stroke="#5aa81a" stroke-width=".8"/>
<path d="M14.5 92.5 L26.5 100 L14.5 107.5 Z" fill="url(#gplay)" stroke="#5aa81a" stroke-width=".8"/>
<path d="M14.5 133.5 L26.5 141 L14.5 148.5 Z" fill="url(#gplay)" stroke="#5aa81a" stroke-width=".8"/>
<path d="M14.5 174.5 L26.5 182 L14.5 189.5 Z" fill="url(#gplay)" stroke="#5aa81a" stroke-width=".8"/>
</svg>

<div class="a" style="left:1294px;top:158px;width:17px;height:246px;background:#ececec;border-left:1px solid #dcdcdc"></div>
<div class="a" style="left:1295px;top:176px;width:15px;height:183px;border:1px solid #a8a8a8;border-radius:3px;background:linear-gradient(90deg,#f6f6f6,#dadada)"></div>
<svg class="a" style="left:1294px;top:158px" width="17" height="246">
<path d="M5 11 L8.5 7.5 L12 11" stroke="#8a8a8a" stroke-width="1.6" fill="none"/>
<path d="M5 233.5 L8.5 237 L12 233.5" stroke="#8a8a8a" stroke-width="2" fill="none"/>
<g fill="#b0b0b0"><rect x="5" y="105" width="1" height="1"/><rect x="7" y="105" width="1" height="1"/><rect x="9" y="105" width="1" height="1"/><rect x="11" y="105" width="1" height="1"/><rect x="5" y="107" width="1" height="1"/><rect x="7" y="107" width="1" height="1"/><rect x="9" y="107" width="1" height="1"/><rect x="11" y="107" width="1" height="1"/><rect x="5" y="109" width="1" height="1"/><rect x="7" y="109" width="1" height="1"/><rect x="9" y="109" width="1" height="1"/><rect x="11" y="109" width="1" height="1"/><rect x="5" y="111" width="1" height="1"/><rect x="7" y="111" width="1" height="1"/><rect x="9" y="111" width="1" height="1"/><rect x="11" y="111" width="1" height="1"/></g>
</svg>
<!-- horizontal scrollbar -->
<div class="a" style="left:376px;top:404px;width:935px;height:17px;background:linear-gradient(#ececec,#dedede);border-bottom:1px solid #8a8a8a"></div>
<div class="a" style="left:1294px;top:403px;width:17px;height:17px;background:#e6e6e6;border-left:1px solid #8a8a8a;border-top:1px solid #8a8a8a"></div>
<div class="a" style="left:377px;top:405px;width:16px;height:13px;border:1px solid #9a9a9a;border-radius:3px;background:linear-gradient(#fbfbfb,#d4d4d4)"></div>
<div class="a" style="left:394px;top:405px;width:389px;height:13px;border:1px solid #9a9a9a;border-radius:3px;background:linear-gradient(#f8f8f8,#eeeeee 40%,#d6d6d6)"></div>
<div class="a" style="left:1277px;top:405px;width:16px;height:13px;border:1px solid #9a9a9a;border-radius:3px;background:linear-gradient(#fbfbfb,#d4d4d4)"></div>
<svg class="a" style="left:376px;top:404px" width="935" height="17">
<path d="M9.5 5 L6.5 8.5 L9.5 12" stroke="#666" stroke-width="1.8" fill="none"/>
<path d="M907 5 L910 8.5 L907 12" stroke="#666" stroke-width="1.8" fill="none"/>
<rect x="207.5" y="4.5" width="1.2" height="1.2" fill="#fff"/><rect x="208.3" y="5.3" width="1" height="1" fill="#888"/><rect x="207.5" y="7.5" width="1.2" height="1.2" fill="#fff"/><rect x="208.3" y="8.3" width="1" height="1" fill="#888"/><rect x="207.5" y="10.5" width="1.2" height="1.2" fill="#fff"/><rect x="208.3" y="11.3" width="1" height="1" fill="#888"/><rect x="210.5" y="4.5" width="1.2" height="1.2" fill="#fff"/><rect x="211.3" y="5.3" width="1" height="1" fill="#888"/><rect x="210.5" y="7.5" width="1.2" height="1.2" fill="#fff"/><rect x="211.3" y="8.3" width="1" height="1" fill="#888"/><rect x="210.5" y="10.5" width="1.2" height="1.2" fill="#fff"/><rect x="211.3" y="11.3" width="1" height="1" fill="#888"/><rect x="213.5" y="4.5" width="1.2" height="1.2" fill="#fff"/><rect x="214.3" y="5.3" width="1" height="1" fill="#888"/><rect x="213.5" y="7.5" width="1.2" height="1.2" fill="#fff"/><rect x="214.3" y="8.3" width="1" height="1" fill="#888"/><rect x="213.5" y="10.5" width="1.2" height="1.2" fill="#fff"/><rect x="214.3" y="11.3" width="1" height="1" fill="#888"/><rect x="216.5" y="4.5" width="1.2" height="1.2" fill="#fff"/><rect x="217.3" y="5.3" width="1" height="1" fill="#888"/><rect x="216.5" y="7.5" width="1.2" height="1.2" fill="#fff"/><rect x="217.3" y="8.3" width="1" height="1" fill="#888"/><rect x="216.5" y="10.5" width="1.2" height="1.2" fill="#fff"/><rect x="217.3" y="11.3" width="1" height="1" fill="#888"/>
</svg>
<!-- splitter -->
<div class="a" style="left:376px;top:421px;width:935px;height:6px;background:#e8e8e8;border-bottom:1px solid #8a8a8a;box-shadow:inset 0 -1px 0 #fafafa"></div>
<div class="a" style="left:803px;top:420px;width:80px;height:7px;border:1px solid #a0a0a0;border-bottom:none;background-color:#eaeaea;background-image:radial-gradient(circle,#9a9a9a 0.6px,transparent 0.7px);background-size:3px 3px"></div>
<svg class="a" style="left:836px;top:420px" width="12" height="6"><path d="M2 1.5 L10 1.5 L6 5.5 Z" fill="#222"/></svg>
<!-- F: tab strip -->
<div class="a" style="left:376px;top:427px;width:935px;height:26px;background:#e6e6e6;border-bottom:1px solid #8a8a8a"></div>
<div class="a" style="left:575px;top:427px;width:736px;height:23px;background:#bebebe;border-left:1px solid #8a8a8a;border-bottom:1px solid #8a8a8a"></div>
<div class="a" style="left:376px;top:427px;width:199px;height:25px;border-right:1px solid #fff;background:linear-gradient(#f8f8f8,#e2e2e2)"></div>
<svg class="a" style="left:380px;top:430px" width="16" height="16"><path d="M3 3.5 L12 8 L3 12.5 Z" fill="url(#gplay)" stroke="#5aa81a" stroke-width=".8"/></svg>
<div class="a tb" style="left:400px;top:432px;line-height:14px;color:#111">F:</div>
<svg class="a" style="left:559px;top:431px" width="14" height="14"><path d="M3.5 3.5 L10.5 10.5 M10.5 3.5 L3.5 10.5" stroke="#7a7a7a" stroke-width="1.5"/></svg>

<!-- DETAIL PANEL -->
<div class="a" style="left:376px;top:453px;width:935px;height:560px;background:#e6e6e6"></div>
<div class="a" style="left:701px;top:462px;height:544px;background:linear-gradient(rgba(180,180,180,0),#a8a8a8 4%,#a8a8a8 96%,rgba(180,180,180,0));box-shadow:1px 0 0 #f6f6f6;width:1px"></div>
<svg class="a" style="left:376px;top:452px" width="330" height="560" viewBox="376 452 330 560">
<defs>
<radialGradient id="rtop" cx=".5" cy=".6" r=".55"><stop offset="0" stop-color="#f59389"/><stop offset=".75" stop-color="#f28a80"/><stop offset="1" stop-color="#e96f66"/></radialGradient>
<radialGradient id="gtopf" cx=".5" cy=".3" r=".7"><stop offset="0" stop-color="#7cc6ac"/><stop offset="1" stop-color="#66b59c"/></radialGradient>
<linearGradient id="gwall" x1="0" y1="0" x2="1" y2="0"><stop offset="0" stop-color="#3f8a78"/><stop offset=".6" stop-color="#4a9686"/><stop offset="1" stop-color="#5aa894"/></linearGradient>
<pattern id="pstripe" width="3" height="3" patternUnits="userSpaceOnUse" patternTransform="rotate(-45)"><rect width="1" height="3" fill="rgba(255,255,255,.12)"/></pattern>
</defs>
<!-- red side wall right -->
<path d="M673 560 L673 586 C673 606 645 628 605 637 L605 612 C640 605 673 585 673 560 Z" fill="#d9aaa3" stroke="#f3c7bd" stroke-width=".8"/>
<!-- red cut wall diagonal -->
<path d="M540 550.5 L605 612 L605 637 L540 576 Z" fill="#b24d2c"/>
<!-- red horizontal cut wall -->
<path d="M407 550.5 L540 550.5 L540 563 L407 563 Z" fill="#ac4a2c"/>
<!-- red top face -->
<path d="M540 550.5 L407 550.5 C407 519 466.5 494.7 540 494.7 C613.5 494.7 673 525 673 560 C673 585 640 605 605 612 Z" fill="url(#rtop)" stroke="#f6b2a6" stroke-width=".8"/>
<path d="M407 550.5 C410 530 466 515 540 515 C613 515 668 535 673 560 C673 525 613.5 494.7 540 494.7 C466.5 494.7 407 519 407 550.5 Z" fill="#e8726a" opacity=".55"/>
<!-- green side wall -->
<path d="M407 562 L407 588 C407 620 466 645 540 645 C562 645 580 643 596 640 L596 614 C580 617 562 619 540 619 C466 619 407 594 407 562 Z" fill="url(#gwall)" stroke="#9ff0c4" stroke-width=".8"/>
<!-- green top face -->
<path d="M540 562 L407 562 C407 594 466 619 540 619 C562 619 580 617 596 614 Z" fill="url(#gtopf)" stroke="#a6f2c8" stroke-width=".9"/>
<path d="M540 562 L596 614 L596 640 L540 590 Z" fill="#8fdcbf" opacity=".35"/>
<!-- stripes overlay -->
<path d="M407 550.5 C407 519 466.5 494.7 540 494.7 C613.5 494.7 673 525 673 560 L673 586 C673 606 645 628 605 637 L596 630 L596 640 C580 643 562 645 540 645 C466 645 407 620 407 588 Z" fill="url(#pstripe)"/>
<!-- leaders -->
<path d="M552 525 L623.5 509.5 L673.5 509.5" stroke="#555" stroke-width="1" fill="none"/>
<path d="M527.5 588 L457 645 L406 645" stroke="#555" stroke-width="1" fill="none"/>
<rect x="406" y="737" width="10" height="10" rx="2" fill="#f07a78" stroke="#b84848" stroke-width="1"/>
<rect x="406" y="757" width="10" height="10" rx="2" fill="#76c8a4" stroke="#3e8a6a" stroke-width="1"/>
</svg>
<div class="a" style="left:628px;top:494px;line-height:14px;font-size:12.5px;color:#2a2a2a">61.80%</div>
<div class="a" style="left:407px;top:630px;line-height:14px;font-size:12.5px;color:#2a2a2a">38.20%</div>
<div class="a b" style="left:478px;top:676px;width:120px;text-align:center;line-height:16px;font-size:14px;color:#222">Drive F:</div>
<div class="a" style="left:421px;top:736px;line-height:14px;font-size:12px;color:#333">Used Space:</div>
<div class="a" style="left:423px;top:756px;line-height:14px;font-size:12px;color:#333">Free Space:</div>
<div class="a" style="left:391px;top:783px;width:100px;text-align:right;line-height:14px;font-size:12px;color:#333">Capacity:</div>
<div class="a" style="left:572px;top:736px;width:100px;text-align:right;line-height:14px;font-size:12px;color:#333">632.80 GB</div>
<div class="a" style="left:572px;top:756px;width:100px;text-align:right;line-height:14px;font-size:12px;color:#333">391.20 GB</div>
<div class="a" style="left:572px;top:783px;width:100px;text-align:right;line-height:14px;font-size:12px;color:#333">1024.00 GB</div>

<div class="a" style="left:726px;top:475px;line-height:20px;font-size:17px;color:#1a1a1a">Drive</div>
<div class="a" style="left:775px;top:485px;width:490px;height:0;border-top:1px dashed #a8a8a8"></div>
<div class="a" style="left:726px;top:640px;line-height:20px;font-size:17px;color:#1a1a1a;letter-spacing:0">Encrypted Volume</div>
<div class="a" style="left:875px;top:650px;width:390px;height:0;border-top:1px dashed #a8a8a8"></div>
<svg class="a" style="left:1276px;top:478px" width="16" height="16"><defs><linearGradient id="cg486" x1="0" y1="0" x2="0" y2="1"><stop offset="0" stop-color="#fafafa"/><stop offset="1" stop-color="#d4d4d4"/></linearGradient></defs><circle cx="8" cy="8" r="6.3" fill="url(#cg486)" stroke="#9a9a9a" stroke-width="1"/><path d="M5 9.5 L8 6.5 L11 9.5 Z" fill="#555"/></svg>
<svg class="a" style="left:1276px;top:643px" width="16" height="16"><defs><linearGradient id="cg651" x1="0" y1="0" x2="0" y2="1"><stop offset="0" stop-color="#fafafa"/><stop offset="1" stop-color="#d4d4d4"/></linearGradient></defs><circle cx="8" cy="8" r="6.3" fill="url(#cg651)" stroke="#9a9a9a" stroke-width="1"/><path d="M5 9.5 L8 6.5 L11 9.5 Z" fill="#555"/></svg>
<div class="a" style="left:704px;top:505px;width:123px;text-align:right;line-height:14px;font-size:12px;color:#1e1e1e">Drive Letter:</div>
<div class="a" style="left:924px;top:505px;line-height:14px;font-size:12px;color:#1e1e1e">F:</div>
<div class="a" style="left:704px;top:526px;width:123px;text-align:right;line-height:14px;font-size:12px;color:#1e1e1e">Label:</div>
<div class="a" style="left:704px;top:547px;width:123px;text-align:right;line-height:14px;font-size:12px;color:#1e1e1e">Type:</div>
<div class="a" style="left:924px;top:547px;line-height:14px;font-size:12px;color:#1e1e1e">Local Disk</div>
<div class="a" style="left:704px;top:568px;width:123px;text-align:right;line-height:14px;font-size:12px;color:#1e1e1e">File System:</div>
<div class="a" style="left:924px;top:568px;line-height:14px;font-size:12px;color:#1e1e1e">NTFS</div>
<div class="a" style="left:704px;top:589px;width:123px;text-align:right;line-height:14px;font-size:12px;color:#1e1e1e">Read/Write Mode:</div>
<div class="a" style="left:924px;top:589px;line-height:14px;font-size:12px;color:#1e1e1e">Read-Write</div>
<div class="a" style="left:704px;top:670px;width:123px;text-align:right;line-height:14px;font-size:12px;color:#1e1e1e">Filename:</div>
<div class="a" style="left:924px;top:670px;line-height:14px;font-size:12px;color:#1e1e1e">My Pictures.pdv</div>
<div class="a" style="left:704px;top:691px;width:123px;text-align:right;line-height:14px;font-size:12px;color:#1e1e1e">Location:</div>
<div class="a" style="left:924px;top:691px;line-height:14px;font-size:12px;color:#1e1e1e">X:\</div>
<div class="a" style="left:704px;top:712px;width:123px;text-align:right;line-height:14px;font-size:12px;color:#1e1e1e">Description:</div>
<div class="a" style="left:704px;top:748px;width:123px;text-align:right;line-height:14px;font-size:12px;color:#1e1e1e">Algorithm:</div>
<div class="a" style="left:924px;top:748px;line-height:14px;font-size:12px;color:#1e1e1e">AES-256</div>
<div class="a" style="left:704px;top:769px;width:123px;text-align:right;line-height:14px;font-size:12px;color:#1e1e1e">Mode:</div>
<div class="a" style="left:924px;top:769px;line-height:14px;font-size:12px;color:#1e1e1e">XTS</div>
<div class="a" style="left:704px;top:790px;width:123px;text-align:right;line-height:14px;font-size:12px;color:#1e1e1e">Hash Algorithm:</div>
<div class="a" style="left:924px;top:790px;line-height:14px;font-size:12px;color:#1e1e1e">SHA-512</div>
<div class="a" style="left:704px;top:826px;width:123px;text-align:right;line-height:14px;font-size:12px;color:#1e1e1e">Size:</div>
<div class="a" style="left:924px;top:826px;line-height:14px;font-size:12px;color:#1e1e1e">1.00 TB</div>
<div class="a" style="left:704px;top:847px;width:123px;text-align:right;line-height:14px;font-size:12px;color:#1e1e1e">Created:</div>
<div class="a" style="left:924px;top:847px;line-height:14px;font-size:12px;color:#1e1e1e">7/8/2012 12:30:00 PM</div>
<div class="a" style="left:704px;top:868px;width:123px;text-align:right;line-height:14px;font-size:12px;color:#1e1e1e">Modified:</div>
<div class="a" style="left:924px;top:868px;line-height:14px;font-size:12px;color:#1e1e1e">7/8/2012 12:30:00 PM</div>
<div class="a lnk" style="left:1064px;top:614px;line-height:14px;font-size:12px;color:#2a2a2a">Format...</div>
<div class="a lnk" style="left:1128px;top:614px;line-height:14px;font-size:12px;color:#2a2a2a">Open in Explorer</div>
<div class="a lnk" style="left:1234px;top:614px;line-height:14px;font-size:12px;color:#2a2a2a">Properties</div>
<div class="a lnk" style="left:1128px;top:893px;line-height:14px;font-size:12px;color:#2a2a2a">Open in Explorer</div>
<div class="a lnk" style="left:1234px;top:893px;line-height:14px;font-size:12px;color:#2a2a2a">Properties</div>
<div id="status" class="a"></div>

<!-- STATUS -->
<div class="a" style="left:931px;top:1017px;height:17px;width:0;border-left:1px dotted #9a9a9a"></div>
<div class="a" style="left:1048px;top:1017px;height:17px;width:0;border-left:1px dotted #9a9a9a"></div>
<svg class="a" style="left:936px;top:1018px" width="14" height="14"><circle cx="6.5" cy="6.5" r="3" fill="#a0e040" stroke="#4c9a18" stroke-width="1"/></svg>
<div class="a" style="left:953px;top:1018px;line-height:14px;font-size:12px;color:#1a1a1a">Mounted: 5</div>
<svg class="a" style="left:1053px;top:1017px" width="14" height="14"><path d="M6.5 3 L7.8 5.9 L11 6.1 L8.6 8.2 L9.4 11.3 L6.5 9.6 L3.6 11.3 L4.4 8.2 L2 6.1 L5.2 5.9 Z" fill="#f9d860" stroke="#c8801a" stroke-width="1"/></svg>
<div class="a" style="left:1070px;top:1018px;line-height:14px;font-size:12px;color:#1a1a1a">Favorites: 5</div>
<svg class="a" style="left:1297px;top:1022px" width="14" height="12"><g fill="#666">
<rect x="9" y="1" width="1.5" height="1.5"/><rect x="6" y="4" width="1.5" height="1.5"/><rect x="9" y="4" width="1.5" height="1.5"/>
<rect x="3" y="7" width="1.5" height="1.5"/><rect x="6" y="7" width="1.5" height="1.5"/><rect x="9" y="7" width="1.5" height="1.5"/>
<rect x="0" y="10" width="1.5" height="1.5"/><rect x="3" y="10" width="1.5" height="1.5"/><rect x="6" y="10" width="1.5" height="1.5"/><rect x="9" y="10" width="1.5" height="1.5"/></g></svg>
<!-- left splitter grip -->
<div class="a" style="left:370px;top:533px;width:5px;height:78px;border:1px solid #9a9a9a;background-color:#ececec;background-image:radial-gradient(circle,#a0a0a0 0.6px,transparent 0.7px);background-size:3px 3px"></div>
<svg class="a" style="left:369px;top:566px" width="7" height="11"><path d="M5.5 1.5 L5.5 9.5 L1.5 5.5 Z" fill="#222"/></svg>
</body></html>
